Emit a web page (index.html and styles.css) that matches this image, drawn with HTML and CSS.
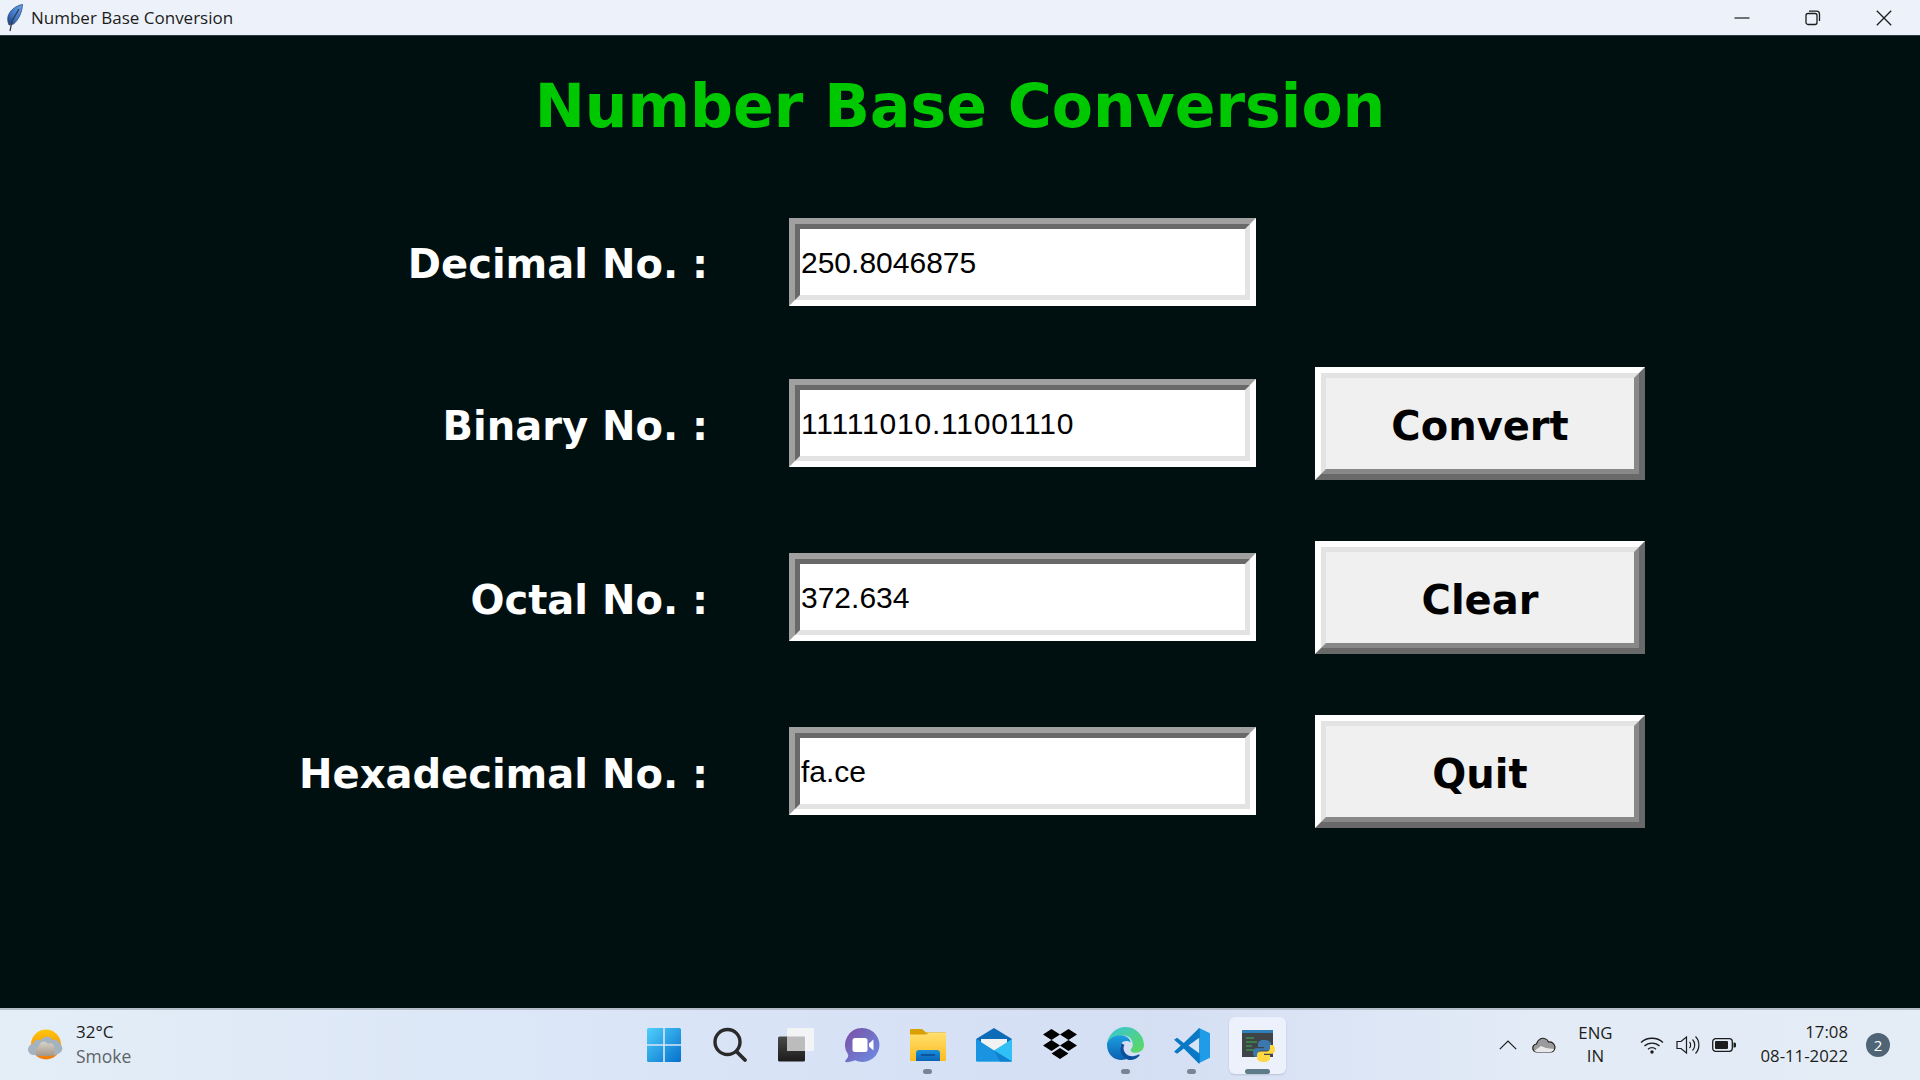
FILE: index.html
```html
<!DOCTYPE html>
<html lang="en">

<head>
    <meta charset="UTF-8">
    <title>Number Base Conversion</title>
    <link rel="stylesheet" href="styles.css">
</head>

<body>
    <header class="titlebar">
        <svg class="feather" width="18" height="28" viewBox="0 0 18 28">
            <defs>
                <linearGradient id="fe" x1="1" y1="0" x2="0" y2="1">
                    <stop offset="0" stop-color="#6aa4ea" />
                    <stop offset=".6" stop-color="#3d74c4" />
                    <stop offset="1" stop-color="#1f3f78" />
                </linearGradient>
            </defs>
            <path d="M16.500 .5C10 1.500 3.500 6.500 2 12.500 1.300 15.500 2 18.500 3 21L7.500 20C12 16.500 16 9 16.500 .5Z" fill="url(#fe)" stroke="#2a4a80" stroke-width=".8" />
            <path d="M13 5 6 17 4 27" fill="none" stroke="#333c4a" stroke-width="1.300" />
        </svg>
        <span class="titlebar-name">Number Base Conversion</span>
        <div class="winctl">
            <svg width="16" height="16" viewBox="0 0 16 16"><path d="M.5 8h15" stroke="#1c1c1c" stroke-width="1.200" /></svg>
            <svg width="16" height="16" viewBox="0 0 16 16" fill="none" stroke="#1c1c1c" stroke-width="1.300"><rect x="1" y="3.500" width="11" height="11" rx="2" /><path d="M4 1.200h7.500a3 3 0 0 1 3 3V11" /></svg>
            <svg width="16" height="16" viewBox="0 0 16 16" fill="none" stroke="#1c1c1c" stroke-width="1.300"><path d="M.8.800 15.200 15.200M15.200.800.8 15.200" /></svg>
        </div>
    </header>

    <main class="app">
        <h1 class="app-title">Number Base Conversion</h1>
        <div class="form">
            <div class="label">Decimal No. :</div>
            <div class="entry first"><div class="entry-in">250.8046875</div></div>
            <div></div>

            <div class="label">Binary No. :</div>
            <div class="entry"><div class="entry-in binary">11111010.11001110</div></div>
            <div class="btn"><div class="btn-in">Convert</div></div>

            <div class="label">Octal No. :</div>
            <div class="entry"><div class="entry-in">372.634</div></div>
            <div class="btn"><div class="btn-in">Clear</div></div>

            <div class="label">Hexadecimal No. :</div>
            <div class="entry"><div class="entry-in">fa.ce</div></div>
            <div class="btn"><div class="btn-in">Quit</div></div>
        </div>
    </main>

    <footer class="taskbar">
        <div class="weather">
            <svg width="36" height="32" viewBox="0 0 36 32">
                <defs>
                    <linearGradient id="sun" x1="0" y1="0" x2="0" y2="1">
                        <stop offset="0" stop-color="#ffc60a" />
                        <stop offset="1" stop-color="#f07a10" />
                    </linearGradient>
                    <linearGradient id="cl" x1="0" y1="0" x2="0" y2="1">
                        <stop offset="0" stop-color="#d9d2c8" />
                        <stop offset="1" stop-color="#a39788" />
                    </linearGradient>
                </defs>
                <circle cx="18" cy="15.500" r="15" fill="url(#sun)" />
                <path d="M6 26a5.500 5.500 0 0 1-1-11c1-4 5-5 8-3.500C15 7 22 6.500 24.500 11c4-1 7 1 7.500 4.500 3 1 3.500 7-.5 8.500C28 27 22 26.500 18 26.500Z" fill="#a5b2c0" />
                <path d="M9 27c-2-3-2-8 2-9 0-5 6-7 9-3 4-2 7 1 6.500 5 1 2 .5 5-1.500 7Z" fill="url(#cl)" />
            </svg>
            <div class="weather-text">
                <div class="weather-temp">32°C</div>
                <div class="weather-desc">Smoke</div>
            </div>
        </div>

        <div class="apps">
            <div class="tile">
                <svg width="36" height="36" viewBox="0 0 36 36">
                    <defs>
                        <linearGradient id="win" x1="0" y1="0" x2="1" y2="1">
                            <stop offset="0" stop-color="#4fd0fb" />
                            <stop offset="1" stop-color="#0470cd" />
                        </linearGradient>
                    </defs>
                    <path d="M1 2.500A1.500 1.500 0 0 1 2.500 1H17.200V17.200H1ZM18.800 1H33.500A1.500 1.500 0 0 1 35 2.500V17.200H18.800ZM1 18.800H17.200V35H2.500A1.500 1.500 0 0 1 1 33.500ZM18.800 18.800H35V33.500A1.500 1.500 0 0 1 33.500 35H18.800Z" fill="url(#win)" />
                </svg>
            </div>
            <div class="tile">
                <svg width="36" height="36" viewBox="0 0 36 36" fill="none" stroke="#2a2a2a">
                    <circle cx="15.500" cy="15" r="12.500" stroke-width="3.400" />
                    <path d="M24.500 24.500 33 33" stroke-width="3.800" stroke-linecap="round" />
                </svg>
            </div>
            <div class="tile">
                <svg width="36" height="36" viewBox="0 0 36 36">
                    <defs>
                        <linearGradient id="tvd" x1="0" y1="0" x2="0" y2="1">
                            <stop offset="0" stop-color="#4a4a4a" />
                            <stop offset="1" stop-color="#1c1c1c" />
                        </linearGradient>
                    </defs>
                    <rect x="0" y="9.500" width="27" height="25" rx="1.500" fill="url(#tvd)" />
                    <rect x="9" y="1" width="27" height="23" rx="1.500" fill="#f4f4f4" fill-opacity=".95" />
                    <path d="M9 9.500h18V24H9Z" fill="#bcbcbc" />
                </svg>
            </div>
            <div class="tile">
                <svg width="36" height="36" viewBox="0 0 36 36">
                    <defs>
                        <linearGradient id="chat" x1="0" y1="0" x2="1" y2="1">
                            <stop offset="0" stop-color="#7a4fa4" />
                            <stop offset="1" stop-color="#6b8fe6" />
                        </linearGradient>
                    </defs>
                    <path d="M18.500 1a17 17 0 1 1-7.500 32.300C8 34.500 4 35.500 1.500 35c-.5-.2-.5-1 0-1.500C3 32 4.500 30 4.200 27.800A17 17 0 0 1 18.500 1Z" fill="url(#chat)" />
                    <rect x="8.500" y="11" width="15" height="14" rx="2.500" fill="#fff" />
                    <path d="M25 16.500 29.500 12.500V23.500L25 19.500Z" fill="#fff" />
                </svg>
            </div>
            <div class="tile on">
                <svg width="36" height="36" viewBox="0 0 36 36">
                    <defs>
                        <linearGradient id="fo" x1="0" y1="0" x2="0" y2="1">
                            <stop offset="0" stop-color="#ffdf6e" />
                            <stop offset="1" stop-color="#fdbd20" />
                        </linearGradient>
                        <linearGradient id="fob" x1="0" y1="0" x2="0" y2="1">
                            <stop offset="0" stop-color="#1a8fdc" />
                            <stop offset="1" stop-color="#0a64b8" />
                        </linearGradient>
                    </defs>
                    <path d="M0 3a1 1 0 0 1 1-1h11l4 3.500h19a1 1 0 0 1 1 1V9H0Z" fill="#d9a000" />
                    <path d="M0 7.500h16l3-1.800H36V33a1 1 0 0 1-1 1H1a1 1 0 0 1-1-1Z" fill="url(#fo)" />
                    <path d="M6 34V26a3 3 0 0 1 3-3h18a3 3 0 0 1 3 3v8Z" fill="url(#fob)" />
                    <path d="M11 28h14" stroke="#0a4a8c" stroke-width="1.500" />
                </svg>
                <span class="dot"></span>
            </div>
            <div class="tile">
                <svg width="36" height="36" viewBox="0 0 36 36">
                    <path d="M0 12 18 1l18 11v22H0Z" fill="#0d6cb8" />
                    <path d="M5 12h26v16H5Z" fill="#f2f2f2" />
                    <path d="M0 12l18 11.500L36 12v21.500a1 1 0 0 1-1 1H1a1 1 0 0 1-1-1Z" fill="#30c0f5" />
                    <path d="M0 12l18 11.500L36 34.500H1a1 1 0 0 1-1-1Z" fill="#1a94e0" />
                    <path d="M18 23.500 36 34.500H24Z" fill="#0f7fd0" />
                </svg>
            </div>
            <div class="tile">
                <svg width="36" height="36" viewBox="0 0 36 36" fill="#000">
                    <path d="M9.500 2 18 7.500 9.500 13 1 7.500ZM26.500 2 35 7.500 26.500 13 18 7.500ZM9.500 13 18 18.500 9.500 24 1 18.500ZM26.500 13 35 18.500 26.500 24 18 18.500ZM18 21 26.500 26.500 18 32 9.500 26.500Z" />
                </svg>
            </div>
            <div class="tile on">
                <svg width="37" height="37" viewBox="0 0 36 36">
                    <defs>
                        <linearGradient id="edg" x1="0" y1="0" x2="1" y2="1">
                            <stop offset="0" stop-color="#36c5d8" />
                            <stop offset="1" stop-color="#5fd95a" />
                        </linearGradient>
                        <linearGradient id="edb" x1="0" y1="0" x2="0" y2="1">
                            <stop offset="0" stop-color="#1ba0e0" />
                            <stop offset="1" stop-color="#0b5fb0" />
                        </linearGradient>
                    </defs>
                    <path d="M18 0a18 18 0 0 1 18 17.500c0 5-4 7.500-8 7.500-3 0-5-1-5-2.500 0-1 2-2 2-5.500C25 11 20 8 15 8 8 8 3 12 0 16 1.500 7 9 0 18 0Z" fill="url(#edg)" />
                    <path d="M0 16C3 10 8 8 14 8c5 0 9 4 9 7-3-2-7-2-9 1-2.500 4 0 11 7 14.500C12 35 .5 30 0 18Z" fill="url(#edb)" />
                    <path d="M14 16c-2.500 5-1 12 6 15.500 3 1.200 8 .5 11.500-3.500.5-1-.5-1.500-1.500-1-4 2-8 2-11-.5-2.500-2-4-6-2-9C15.500 17 14.500 15.500 14 16Z" fill="#0c4f9e" />
                </svg>
                <span class="dot"></span>
            </div>
            <div class="tile on">
                <svg width="37" height="37" viewBox="0 0 36 36">
                    <path d="M25.500 1 36 6v24l-10.500 5L10 20l4-4.500Z" fill="#1f9be8" />
                    <path d="M25.500 1 10.500 15.500 4 10.500 1 12.500 7.500 18 1 24l3 2 6.500-5 15 15 .5-2V3Z" fill="#0a79c5" />
                    <path d="M25.500 10.500 15 18l10.500 7.500Z" fill="#d8e3f6" />
                </svg>
                <span class="dot"></span>
            </div>
            <div class="tile current">
                <svg width="36" height="36" viewBox="0 0 36 36">
                    <rect x="2" y="3" width="31" height="27" fill="#3f4448" />
                    <rect x="2" y="3" width="31" height="3" fill="#2f7fb8" />
                    <path d="M6 11h8M6 15h11M6 19h6M6 23h8" stroke="#3bb54a" stroke-width="1.200" />
                    <g transform="translate(13 13)">
                        <path d="M11 0C6.500 0 5 1.800 5 4v3h6v1.200H3C1 8.200 0 10 0 12.500S1 17 3 17h2v-3c0-2 1.500-3.500 3.500-3.500h6c2 0 3.500-1.500 3.500-3.500V4c0-2.500-3-4-7-4Z" fill="#3a78ae" />
                        <path d="M11 0C6.500 0 5 1.800 5 4v3h6v1.200H3C1 8.200 0 10 0 12.500S1 17 3 17h2v-3c0-2 1.500-3.500 3.500-3.500h6c2 0 3.500-1.500 3.500-3.500V4c0-2.500-3-4-7-4Z" fill="#ffd843" transform="rotate(180 11 11)" />
                    </g>
                </svg>
                <span class="dot wide"></span>
            </div>
        </div>

        <div class="tray">
            <svg class="t-chev" width="18" height="10" viewBox="0 0 18 10" fill="none" stroke="#1c1c1c" stroke-width="1.200"><path d="M.8 9.200 9 1l8.200 8.200" /></svg>
            <svg class="t-cloud" width="24" height="16" viewBox="0 0 24 16">
                <path d="M5 15a4 4 0 0 1-.5-8C5.500 3 9 .5 12.500 1.500c2 .5 3.500 2 4 3.500 3-.5 6 1.500 6.500 5 0 3-2 5-4 5Z" fill="#9a9a9a" stroke="#222" stroke-width="1.200" />
                <path d="M2 14 9 9l5 2 8 1c-.5 2-2 3-4 3H5Z" fill="#e8e8e8" />
            </svg>
            <div class="t-lang"><div>ENG</div><div>IN</div></div>
            <svg class="t-wifi" width="24" height="18" viewBox="0 0 24 18" fill="none" stroke="#1c1c1c" stroke-width="1.300">
                <path d="M1 6.500C7 .8 17 .8 23 6.500M4.500 10c4-3.800 11-3.800 15 0M8 13.200c2.200-2 5.800-2 8 0" />
                <circle cx="12" cy="16" r="1.700" fill="#1c1c1c" stroke="none" />
            </svg>
            <svg class="t-vol" width="24" height="20" viewBox="0 0 24 20" fill="none" stroke="#1c1c1c" stroke-width="1.200">
                <path d="M1 6.500h4L10.500 2v16L5 13.500H1Z" />
                <path d="M13.500 7c1.500 1.500 1.500 4.500 0 6M16.500 4.500c3 3 3 8 0 11M19.500 1.500c4.500 4.500 4.500 12.500 0 17" />
            </svg>
            <svg class="t-bat" width="24" height="14" viewBox="0 0 24 14">
                <rect x=".7" y=".7" width="19.600" height="12.600" rx="3" fill="none" stroke="#1c1c1c" stroke-width="1.300" />
                <rect x="3" y="3" width="13" height="8" rx="1" fill="#1c1c1c" />
                <path d="M21.500 4.500h1a1.500 1.500 0 0 1 1.500 1.500v2a1.500 1.500 0 0 1-1.500 1.500h-1Z" fill="#1c1c1c" />
            </svg>
            <div class="t-clock"><div>17:08</div><div>08-11-2022</div></div>
            <div class="t-badge">2</div>
        </div>
    </footer>
</body>

</html>
```

FILE: styles.css
```css
* {
    box-sizing: border-box;
}

html,
body {
    margin: 0;
    padding: 0;
}

body {
    width: 1920px;
    height: 1080px;
    overflow: hidden;
    display: flex;
    flex-direction: column;
    font-family: "Open Sans", "Noto Sans", sans-serif;
    background: #000f10;
}

.titlebar {
    height: 36px;
    flex: none;
    display: flex;
    align-items: center;
    background: #edf2fa;
    border-bottom: 1px solid #2f3a40;
    padding-left: 6px;
    color: #1c1c1c;
}

.feather {
    flex: none;
}

.titlebar-name {
    margin-left: 7px;
    font-size: 17px;
}

.winctl {
    margin-left: auto;
    margin-right: 28px;
    display: flex;
    gap: 55px;
}

.app {
    flex: 1;
    background: #000f10;
}

.app-title {
    margin: 0;
    padding-top: 36px;
    height: 182px;
    text-align: center;
    font-family: "DejaVu Sans", Verdana, sans-serif;
    font-weight: bold;
    font-size: 60px;
    line-height: 68px;
    color: #00c800;
}

.form {
    display: grid;
    grid-template-columns: 789px 526px 330px;
    grid-template-rows: 88px 113px 113px 113px;
    row-gap: 61px;
    align-items: start;
}

.label {
    align-self: center;
    padding: 4px 81px 0 0;
    text-align: right;
    font-family: "DejaVu Sans", Verdana, sans-serif;
    font-weight: bold;
    font-size: 40px;
    line-height: 50px;
    color: #fff;
}

.entry {
    width: 467px;
    height: 88px;
    margin-top: 12px;
    border: 6px solid;
    border-color: #a0a0a0 #fff #fff #a0a0a0;
}

.entry.first {
    margin-top: 0;
}

.entry-in {
    height: 100%;
    border: 5px solid;
    border-color: #696969 #e3e3e3 #e3e3e3 #696969;
    background: #fff;
    padding: 2px 0 0 1px;
    display: flex;
    align-items: center;
    font-family: "Liberation Sans", Arial, sans-serif;
    font-size: 30px;
    color: #000;
}

.entry-in.binary {
    letter-spacing: .8px;
}

.btn {
    height: 113px;
    border: 6px solid;
    border-color: #fff #696969 #696969 #fff;
}

.btn-in {
    height: 100%;
    border: 5px solid;
    border-color: #e3e3e3 #888 #888 #e3e3e3;
    background: #f0f0f0;
    padding-top: 4px;
    display: flex;
    align-items: center;
    justify-content: center;
    font-family: "DejaVu Sans", Verdana, sans-serif;
    font-weight: bold;
    font-size: 40px;
    color: #000;
}

.taskbar {
    height: 72px;
    flex: none;
    display: grid;
    grid-template-columns: 1fr auto 1fr;
    align-items: center;
    border-top: 2px solid #b4bcc8;
    background: linear-gradient(90deg, #e4eef7 0%, #d9e4f7 35%, #d5dff4 60%, #e2ebf6 80%, #e4edf6 100%);
}

.weather {
    display: flex;
    align-items: center;
    padding-left: 28px;
    gap: 12px;
}

.weather-text {
    line-height: 24px;
    padding-bottom: 2px;
}

.weather-temp {
    font-size: 17px;
    color: #1c1c1c;
}

.weather-desc {
    font-size: 17.5px;
    color: #5f6368;
}

.apps {
    display: flex;
    gap: 9px;
    margin-left: 1px;
}

.tile {
    position: relative;
    width: 57px;
    height: 57px;
    display: flex;
    align-items: center;
    justify-content: center;
    border-radius: 6px;
}

.tile.current {
    background: #edf1fb;
    box-shadow: 0 1px 2px #b8c2d6;
}

.dot {
    position: absolute;
    left: 24px;
    bottom: 0;
    width: 9px;
    height: 5px;
    border-radius: 3px;
    background: #7a8494;
}

.dot.wide {
    left: 16px;
    width: 25px;
    background: #5f7a88;
}

.tray {
    display: flex;
    align-items: center;
    justify-self: end;
    color: #1c1c1c;
    font-size: 16.8px;
    padding-right: 30px;
}

.t-cloud {
    margin-left: 15px;
}

.t-lang {
    margin-left: 13px;
    width: 52px;
    text-align: center;
    line-height: 23px;
    padding-bottom: 2px;
}

.t-wifi {
    margin-left: 19px;
}

.t-vol {
    margin-left: 12px;
}

.t-bat {
    margin-left: 12px;
}

.t-clock {
    margin-left: 24px;
    text-align: right;
    line-height: 24px;
    padding-bottom: 2px;
}

.t-badge {
    margin-left: 18px;
    width: 24px;
    height: 24px;
    border-radius: 50%;
    background: #4f6475;
    color: #fff;
    font-size: 15px;
    display: flex;
    align-items: center;
    justify-content: center;
}
```
